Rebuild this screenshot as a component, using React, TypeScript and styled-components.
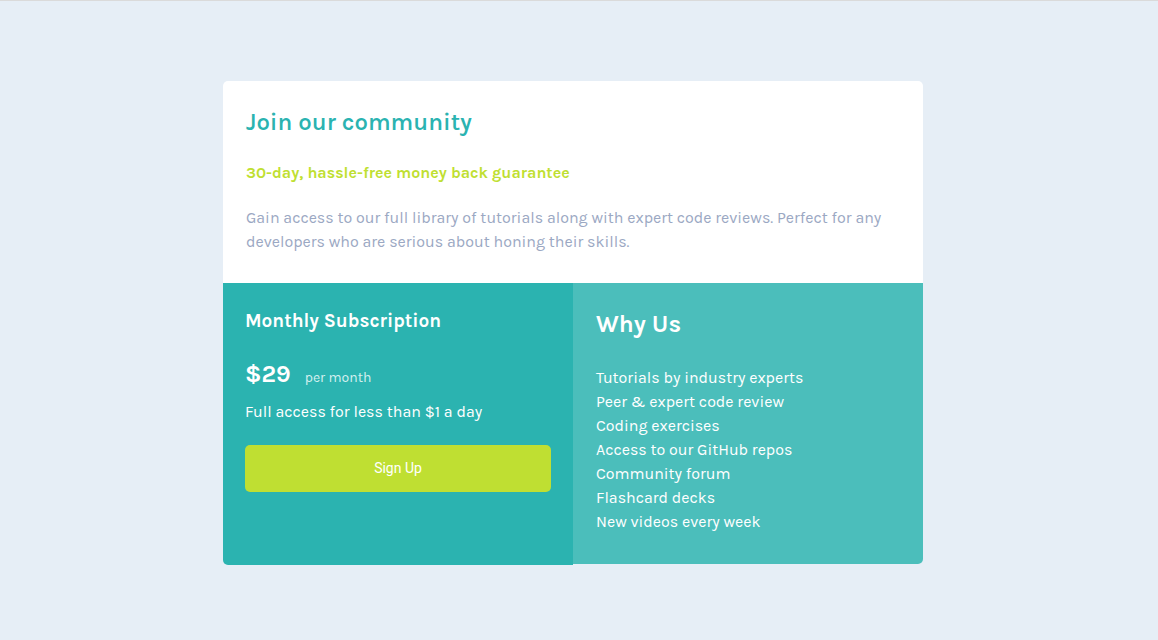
import React from "react";
import styled, { createGlobalStyle } from "styled-components";

const GlobalStyle = createGlobalStyle`
  *, *::before, *::after { box-sizing: border-box; }
  body {
    margin: 0;
    background: #e6eef6;
    font-family: Karla, Inter, "Liberation Sans", sans-serif;
    font-size: 16px;
    line-height: 24px;
  }
  h1, h2, h3, p, ul { margin: 0; padding: 0; }
`;

const Page = styled.main`
  min-height: 100vh;
  padding: 80px 24px 40px 12px;
  border-top: 1px solid #dadada;
`;

const Card = styled.article`
  width: 100%;
  max-width: 700px;
  margin: 0 auto;
`;

const Intro = styled.header`
  padding: 24px 23px 29px;
  border-radius: 5px 5px 0 0;
  background: #ffffff;
  color: #9ba8c3;
`;

const Title = styled.h1`
  margin-bottom: 22px;
  color: #2bb3b1;
  font-size: 24px;
  font-weight: 600;
  line-height: 34px;
`;

const Guarantee = styled.h2`
  margin-bottom: 21px;
  color: #bfdf32;
  font-size: 16px;
  font-weight: 700;
  line-height: 24px;
`;

const Columns = styled.div`
  display: grid;
  grid-template-columns: 1fr 1fr;
`;

const Subscription = styled.section`
  padding: 22px;
  border-radius: 0 0 0 5px;
  background: #2bb3b0;
  color: #ffffff;
`;

const SubscriptionTitle = styled.h2`
  margin-bottom: 21px;
  font-size: 19px;
  font-weight: 700;
  line-height: 32px;
`;

const Price = styled.p`
  display: flex;
  align-items: baseline;
  gap: 14px;
  margin-bottom: 6px;
  line-height: 32px;
`;

const Amount = styled.strong`
  font-size: 24px;
  font-weight: 700;
`;

const Period = styled.span`
  color: #d4f0ef;
  font-size: 14px;
`;

const SignUp = styled.button`
  display: block;
  width: 100%;
  margin-top: 21px;
  padding: 12px;
  border: 0;
  border-radius: 5px;
  background: #bfdf32;
  color: #ffffff;
  font-family: Roboto, sans-serif;
  font-size: 14px;
  line-height: 23px;
  cursor: pointer;
`;

const Benefits = styled.section`
  margin-bottom: 1px;
  padding: 24px 23px 30px;
  border-radius: 0 0 5px 0;
  background: #4bbebb;
  color: #ffffff;
`;

const BenefitsTitle = styled.h2`
  margin-bottom: 25px;
  font-size: 24px;
  font-weight: 700;
  line-height: 34px;
`;

const BenefitList = styled.ul`
  list-style: none;
`;

const benefits = [
  "Tutorials by industry experts",
  "Peer & expert code review",
  "Coding exercises",
  "Access to our GitHub repos",
  "Community forum",
  "Flashcard decks",
  "New videos every week",
];

export default function App() {
  return (
    <>
      <GlobalStyle />
      <Page>
        <Card>
          <Intro>
            <Title>Join our community</Title>
            <Guarantee>30-day, hassle-free money back guarantee</Guarantee>
            <p>
              Gain access to our full library of tutorials along with expert code
              reviews. Perfect for any developers who are serious about honing
              their skills.
            </p>
          </Intro>
          <Columns>
            <Subscription>
              <SubscriptionTitle>Monthly Subscription</SubscriptionTitle>
              <Price>
                <Amount>$29</Amount>
                <Period>per month</Period>
              </Price>
              <p>Full access for less than $1 a day</p>
              <SignUp type="button">Sign Up</SignUp>
            </Subscription>
            <Benefits>
              <BenefitsTitle>Why Us</BenefitsTitle>
              <BenefitList>
                {benefits.map((benefit) => (
                  <li key={benefit}>{benefit}</li>
                ))}
              </BenefitList>
            </Benefits>
          </Columns>
        </Card>
      </Page>
    </>
  );
}
